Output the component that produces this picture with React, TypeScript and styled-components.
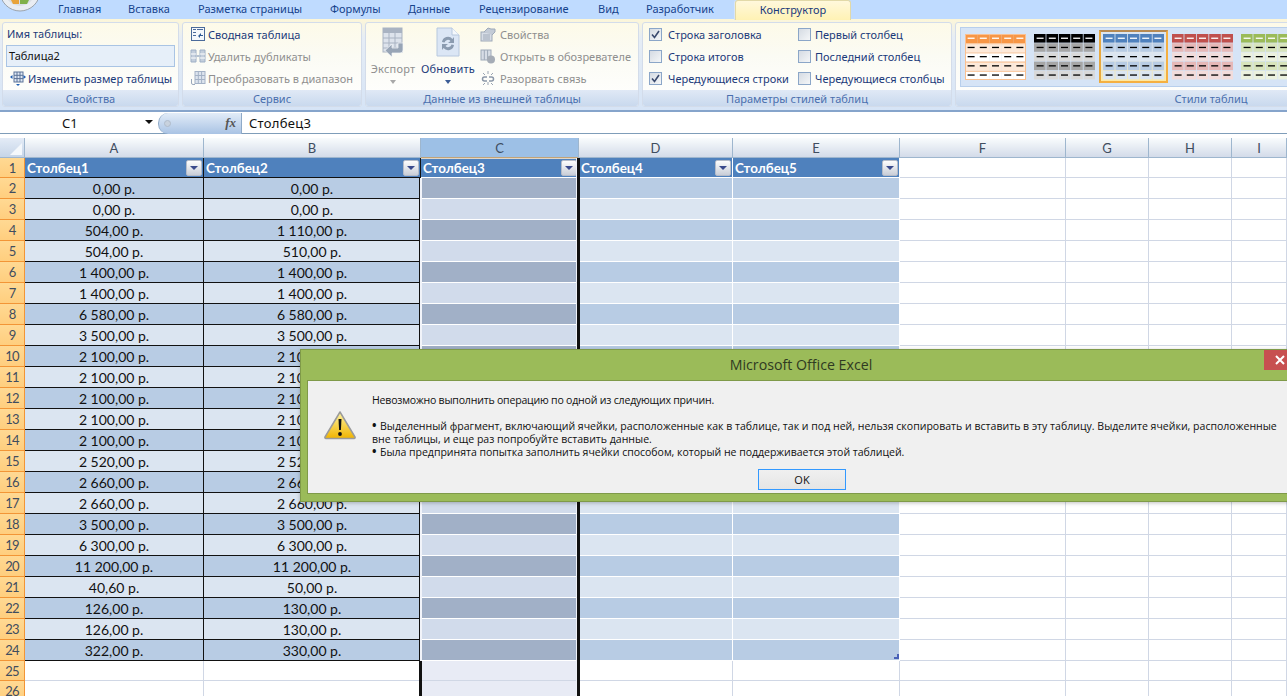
import React from "react";
import styled, { createGlobalStyle, css } from "styled-components";

const Global = createGlobalStyle`
  html, body { margin: 0; padding: 0; background: #fff; overflow: hidden; }
  * { box-sizing: border-box; }
`;
const UI = `"Noto Sans", "DejaVu Sans", sans-serif`;
const CELL = `Lato, "Open Sans", "Noto Sans", sans-serif`;

const Page = styled.div`
  position: relative; width: 1287px; height: 696px; overflow: hidden; background: #fff; font-family: ${UI};
`;
const TabBar = styled.div`
  position: relative; display: flex; height: 19px; padding-left: 58px; background: #bfdbff;
`;
const OfficeOrb = styled.svg`
  position: absolute; left: 0; top: 0; width: 44px; height: 12px;
`;
const Tab = styled.div<{ $w: number; $active?: boolean }>`
  width: ${(p) => p.$w}px; height: 19px; font-size: 11px; line-height: 18px; color: #15428b; white-space: nowrap;
  ${(p) => p.$active && css`
    text-align: center; height: 20px; border: 1px solid #e2d9a8; border-bottom: 0; border-radius: 3px 3px 0 0;
    background: linear-gradient(#fff8dc, #fff2b4); color: #1a3a7c; box-shadow: -1px 0 0 #d8e6f8;
  `}
`;
const Ribbon = styled.div`
  display: flex; height: 93px; gap: 3px; padding: 3px 0 0 2px;
  background: linear-gradient(#fdf6d8 0, #e6edf5 20%, #d6e4f6 100%);
  border-bottom: 2px solid #86a4cb;
`;
const Group = styled.section<{ $w: number }>`
  display: flex; flex-direction: column; flex: none; width: ${(p) => p.$w}px; height: 85px;
  border: 1px solid #d3dcea; border-radius: 3px; overflow: hidden;
  background: linear-gradient(#fdfae8 0, #fbfbf4 40%, #ffffff 100%);
`;
const GroupBody = styled.div`
  flex: 1; display: flex; min-height: 0;
`;
const GroupLabel = styled.div<{ $w?: number }>`
  height: 16px; flex: none; text-align: center; font-size: 11px; line-height: 17px; color: #4a6fae;
  background: linear-gradient(#e0e9f6, #c9d9ee);
  ${(p) => p.$w && `width:${p.$w}px;`}
`;
const Stack = styled.div<{ $x?: number; $w?: number }>`
  display: flex; flex-direction: column; padding-left: ${(p) => p.$x ?? 0}px; ${(p) => p.$w ? `width:${p.$w}px;flex:none;` : ""}
`;
const Row = styled.div<{ $off?: boolean; $gap?: number }>`
  display: flex; align-items: center; height: 22px; gap: ${(p) => p.$gap ?? 4}px; font-size: 11px; white-space: nowrap;
  color: ${(p) => (p.$off ? "#8f8f8f" : "#1b3a7a")};
`;
const NameLabel = styled.div`
  height: 22px; padding-left: 4px; font-size: 11px; line-height: 22px; color: #1b3a7a;
`;
const NameInput = styled.div`
  width: 169px; height: 22px; margin-left: 3px; padding-left: 2px; font-size: 11px; line-height: 20px; color: #111;
  background: #e6eff9; border: 1px solid #a9c4e4;
`;
const ResizeRow = styled(Row)`
  padding-left: 7px;
`;
const Big = styled.div<{ $off?: boolean; $w: number }>`
  display: flex; flex-direction: column; align-items: center; flex: none; width: ${(p) => p.$w}px; padding-top: 4px;
  font-size: 11px; letter-spacing: 0.2px; white-space: nowrap; color: ${(p) => (p.$off ? "#8f8f8f" : "#1b3a7a")};
`;
const BigLabel = styled.div`
  margin-top: 4px; line-height: 16px;
`;
const BigIcon = styled.svg`
  width: 30px; height: 30px; flex: none;
`;
const Caret = styled.div<{ $off?: boolean }>`
  margin-top: 3px; width: 0; height: 0; border: 3.5px solid transparent; border-bottom: 0;
  border-top: 4px solid ${(p) => (p.$off ? "#a8a8a8" : "#3b5c96")};
`;
const Check = styled.span`
  display: inline-flex; align-items: center; justify-content: center; flex: none; width: 13px; height: 13px;
  border: 1px solid #8ba6c8; background: linear-gradient(135deg, #d5dbe3, #f4f6f8);
`;
const Icon = styled.svg`
  width: 16px; height: 16px; flex: none;
`;
const Gallery = styled.div`
  display: flex; width: 400px; height: 60px; margin: 4px 0 0 4px; padding: 6px 0 0 4px; gap: 8px;
  background: #d6e4f6; border: 1px solid #b8cfec;
`;
const SwatchBox = styled.div<{ $sel?: boolean }>`
  flex: none; width: 61px; height: 46px;
  ${(p) => p.$sel && css`
    width: 69px; height: 53px; margin: -4px -4px 0 -4px; padding: 2px;
    border: 2px solid #f5b041; border-top-color: #b78a52; border-left-color: #e8a83f;
    background: linear-gradient(#dbe5f1, #dfe6ec 55%, #ffe9a0);
  `}
`;
const SwatchSvg = styled.svg`
  display: block; width: 61px; height: 46px;
`;

const FormulaBar = styled.div`
  display: flex; align-items: center; height: 21px; background: #fff; border-bottom: 1px solid #7f9db9; font-size: 13px; color: #111;
  margin-top: 1px;
`;
const NameBox = styled.div`
  position: relative; width: 158px; flex: none; padding-left: 62px;
`;
const NameArrow = styled.div`
  position: absolute; left: 145px; top: 6px; width: 0; height: 0; border: 4px solid transparent; border-bottom: 0; border-top: 4px solid #111;
`;
const Pill = styled.div`
  display: flex; align-items: center; justify-content: space-between; width: 84px; height: 21px; flex: none; padding: 0 5px;
  border-radius: 10px 0 0 10px; background: linear-gradient(#e2ecf8, #a9c3e4); border-left: 1px solid #8faac8; border-right: 1px solid #8faac8;
`;
const Dot = styled.span`
  width: 7px; height: 7px; border-radius: 50%; background: #c8d2de; border: 1px solid #b0bccb;
`;
const Fx = styled.span`
  font-family: "Liberation Serif", serif; font-style: italic; font-weight: 700; font-size: 13px; color: #555;
`;
const FormulaText = styled.div`
  padding-left: 7px; font-size: 13px; letter-spacing: 0.3px;
`;

const Sheet = styled.div`
  position: relative; display: grid; margin-top: 4px; height: 558px;
  grid-template-columns: 25px 179px 217px 158px 154px 167px 166px 83px 83px 55px;
  grid-template-rows: 20px 20px repeat(23, 21px) 20px 20px;
  font-family: ${CELL}; font-size: 14px; color: #111;
`;
const Corner = styled.div`
  display: flex; align-items: flex-end; justify-content: flex-end; padding: 0 2px 2px 0;
  background: linear-gradient(#e4ecf7, #c6d5e8); border-right: 1px solid #9eb6ce; border-bottom: 1px solid #9eb6ce;
`;
const CornerMark = styled.div`
  width: 0; height: 0; border-style: solid; border-width: 0 0 12px 12px; border-color: transparent transparent #f4f8fc transparent;
`;
const ColHead = styled.div<{ $sel?: boolean }>`
  display: flex; align-items: center; justify-content: center; font-size: 13px; color: #3f4d5f;
  border-right: 1px solid #9eb6ce; border-bottom: 1px solid #9eb6ce;
  background: ${(p) => (p.$sel ? "#9dc0e6" : "linear-gradient(#f9fcfd, #d3dbe9)")};
`;
const RowHead = styled.div`
  display: flex; align-items: center; justify-content: center; font-size: 13px; letter-spacing: -0.8px; color: #3f4d5f;
  background: linear-gradient(#ffd993, #ffce7e); border-right: 1px solid #f29536; border-bottom: 1px solid #f29536;
`;
const TableHead = styled.div<{ $line: string }>`
  display: flex; align-items: center; justify-content: space-between; padding: 0 1px 0 2px;
  background: #4f81bd; color: #fff; font-weight: 700; font-size: 13.4px;
  border-right: 1px solid ${(p) => p.$line}; border-bottom: 1px solid ${(p) => p.$line};
`;
const Filter = styled.div`
  display: flex; align-items: center; justify-content: center; flex: none; width: 16px; height: 16px; border-radius: 2px;
  background: linear-gradient(#fdfdfd, #c9ced8); border: 1px solid #b5bcc9;
`;
const FilterArrow = styled.div`
  width: 0; height: 0; border: 4px solid transparent; border-bottom: 0; border-top: 4px solid #3a4a8c;
`;
const Cell = styled.div<{ $bg: string; $line: string }>`
  position: relative; display: flex; align-items: center; justify-content: center; padding-top: 1px;
  background: ${(p) => p.$bg}; border-right: 1px solid ${(p) => p.$line}; border-bottom: 1px solid ${(p) => p.$line}; white-space: nowrap;
`;
const Handle = styled.svg`
  position: absolute; right: 0; bottom: 1px; width: 5px; height: 5px;
`;
const SelLeft = styled.div`
  position: absolute; left: 419px; top: 40px; bottom: 0; width: 3px; border-left: 1px solid #111; border-right: 2px solid #f2f4fa;
`;
const SelLeftLow = styled.div`
  position: absolute; left: 419px; top: 523px; bottom: 0; width: 3px; background: #111;
`;
const SelRight = styled.div`
  position: absolute; left: 576px; top: 20px; bottom: 0; width: 4px; border-left: 1px solid #eef1f8; background: #111;
`;
const SelTop = styled.div`
  position: absolute; left: 421px; top: 19px; width: 157px; height: 2px; background: linear-gradient(#b28a52, #f0f0f0);
`;

const Dialog = styled.div`
  position: absolute; left: 300px; top: 349px; width: 1002px; height: 153px; display: flex; flex-direction: column;
  padding: 0 6px 7px; background: #9bbb59; border: 1px solid #7f9a49; box-shadow: 0 1px 4px rgba(0,0,0,.25); font-family: "Open Sans", "Noto Sans", sans-serif;
`;
const Title = styled.div`
  flex: none; height: 30px; text-align: center; font-size: 14.2px; line-height: 30px; color: #2f3a22;
`;
const Close = styled.div`
  position: absolute; top: 0; right: 5px; width: 32px; height: 20px; display: flex; align-items: center; justify-content: center;
  background: #c75050; color: #fff;
`;
const DialogBody = styled.div`
  position: relative; flex: 1; display: flex; background: #f0f0f0; border: 1px solid #7f9a49; padding: 13px 0 0 64px; font-size: 10.55px; color: #111; line-height: 13px;
`;
const Warn = styled.svg`
  position: absolute; left: 15px; top: 29px; width: 34px; height: 30px;
`;
const Msg = styled.div`
  display: flex; flex-direction: column; white-space: nowrap;
`;
const Line = styled.div<{ $track?: number }>`
  ${(p) => p.$track && `letter-spacing: ${p.$track}px;`}
`;
const Bullet = styled.span`
  display: inline-block; width: 8px; font-size: 12px; line-height: 10px; font-weight: 700;
`;
const Gap = styled.div`
  height: 13px;
`;
const Ok = styled.div`
  position: absolute; left: 450px; top: 88px; width: 88px; height: 21px; text-align: center; line-height: 19px; font-size: 11px;
  border: 1px solid #3399ff; background: linear-gradient(#f0f0f0, #e5e5e5);
`;

const Swatch = ({ head, a, b, frame }: { head: string; a: string; b: string; frame?: string }) => (
  <SwatchSvg viewBox="0 0 61 46">
    {[0, 1, 2, 3, 4].map((r) =>
      [0, 1, 2, 3, 4].map((c) => (
        <g key={`${r}-${c}`}>
          <rect x={frame ? c * 12.2 : c * 12.4} y={r * 9.2} width={frame ? 12.2 : 11.6} height={frame ? 9.2 : 8.6} fill={r === 0 ? head : r % 2 ? a : b} />
          <rect x={c * 12.2 + 2.6} y={r * 9.2 + 3.6} width={7} height={1.3} fill={r === 0 ? "#fff" : "#000"} />
        </g>
      ))
    )}
    {frame && <rect x=".5" y=".5" width="60" height="45" fill="none" stroke={frame} />}
    {frame && [1, 2, 3, 4].map((r) => <rect key={r} x="0" y={r * 9.2} width="61" height="1" fill={frame} />)}
  </SwatchSvg>
);

const IconPivot = () => (
  <Icon viewBox="0 0 16 16">
    <rect x="1.5" y="1.5" width="13" height="13" fill="#f4f7fb" stroke="#4a6a9a" />
    <path d="M3 3h3v1H3zM7 3h6v1H7zM3 6h3v1H3zM3 9h3v1H3z" fill="#4a6a9a" />
    <path d="M8 10l3-3 0 2h2v1h-3v2z" fill="#2f5a94" />
  </Icon>
);
const IconDup = () => (
  <Icon viewBox="0 0 16 16">
    <path d="M1 2h5v12H1zM10 2h5v12h-5z" fill="#c3cedc" stroke="#9fb0c6" />
    <path d="M1 6h5M1 10h5M10 6h5M10 10h5" stroke="#fff" />
    <path d="M6.5 8h3" stroke="#9fb0c6" strokeWidth="1.5" />
  </Icon>
);
const IconConv = () => (
  <Icon viewBox="0 0 16 16">
    <rect x="5" y="1.5" width="10" height="12" fill="#dde4ee" stroke="#a4b2c6" />
    <path d="M8.3 2v11M11.6 2v11M5 5.5h10M5 9.5h10" stroke="#a4b2c6" />
    <path d="M1.5 9v4a1.500 1.500 0 0 0 1.500 1.500h2" stroke="#9aa8bc" fill="none" />
  </Icon>
);
const IconResize = () => (
  <Icon viewBox="0 0 16 16">
    <rect x="4" y="2" width="9" height="10" fill="#dfe8f5" stroke="#5b7297" />
    <path d="M7 2v10M10 2v10M4 5.300h9M4 8.600h9" stroke="#5b7297" />
    <path d="M0 7l2.500-2v4zM16 7l-2.500-2v4zM6 14h4l-2 2z" fill="#1f5fb4" />
  </Icon>
);
const IconProps = () => (
  <Icon viewBox="0 0 16 16">
    <rect x="1" y="6" width="11" height="9" fill="#d7dde6" stroke="#9ea9b8" />
    <path d="M3 9h7M3 11h7M3 13h7" stroke="#9ea9b8" />
    <path d="M4 6l4-4 3 1h4v3l-3 3" fill="#c3cbd6" stroke="#9ea9b8" />
  </Icon>
);
const IconBrowser = () => (
  <Icon viewBox="0 0 16 16">
    <rect x="1" y="2" width="10" height="10" fill="#d7dde6" stroke="#9ea9b8" />
    <path d="M4.300 2v10M7.600 2v10" stroke="#9ea9b8" />
    <circle cx="11" cy="11.500" r="4" fill="#a5acb6" />
  </Icon>
);
const IconUnlink = () => (
  <Icon viewBox="0 0 16 16">
    <path d="M7 7H4.500a2 2 0 0 0 0 4H7M9 7h2.500a2 2 0 0 1 0 4H9" fill="none" stroke="#8b97a8" strokeWidth="1.500" />
    <path d="M8 1v3M8 12v3M3 3l2 2M13 3l-2 2M3 15l2-2M13 15l-2-2" stroke="#9aa4b2" />
  </Icon>
);
const IconCheck = () => (
  <svg width="9" height="9" viewBox="0 0 9 9">
    <path d="M1 4.500L3.500 7.500 8 1" fill="none" stroke="#3a4a6e" strokeWidth="1.600" />
  </svg>
);

const cols = ["A", "B", "C", "D", "E", "F", "G", "H", "I"];
const vals: [string, string][] = [
  ["0,00 р.", "0,00 р."], ["0,00 р.", "0,00 р."], ["504,00 р.", "1 110,00 р."], ["504,00 р.", "510,00 р."],
  ["1 400,00 р.", "1 400,00 р."], ["1 400,00 р.", "1 400,00 р."], ["6 580,00 р.", "6 580,00 р."], ["3 500,00 р.", "3 500,00 р."],
  ["2 100,00 р.", "2 100,00 р."], ["2 100,00 р.", "2 100,00 р."], ["2 100,00 р.", "2 100,00 р."], ["2 100,00 р.", "2 100,00 р."],
  ["2 100,00 р.", "2 100,00 р."], ["2 520,00 р.", "2 520,00 р."], ["2 660,00 р.", "2 660,00 р."], ["2 660,00 р.", "2 660,00 р."],
  ["3 500,00 р.", "3 500,00 р."], ["6 300,00 р.", "6 300,00 р."], ["11 200,00 р.", "11 200,00 р."], ["40,60 р.", "50,00 р."],
  ["126,00 р.", "130,00 р."], ["126,00 р.", "130,00 р."], ["322,00 р.", "330,00 р."],
];
const tabs: [string, number][] = [["Главная", 70], ["Вставка", 70], ["Разметка страницы", 132], ["Формулы", 78], ["Данные", 71], ["Рецензирование", 119], ["Вид", 48], ["Разработчик", 89]];

export default function App() {
  return (
    <Page>
      <Global />
      <TabBar>
        <OfficeOrb viewBox="0 0 44 12">
          <circle cx="20" cy="-9" r="20" fill="#e9edf3" stroke="#9aa3ad" />
          <circle cx="20" cy="-9" r="15" fill="#d9dfe7" />
          <path d="M11 0h8v4h-6z" fill="#e8a33a" />
          <path d="M20 0h9l-2 4h-7z" fill="#7fb04a" />
        </OfficeOrb>
        {tabs.map(([t, w]) => <Tab key={t} $w={w}>{t}</Tab>)}
        <Tab $w={116} $active>Конструктор</Tab>
      </TabBar>
      <Ribbon>
        <Group $w={177}>
          <GroupBody>
            <Stack>
              <NameLabel>Имя таблицы:</NameLabel>
              <NameInput>Таблица2</NameInput>
              <ResizeRow $gap={2}><IconResize />Изменить размер таблицы</ResizeRow>
            </Stack>
          </GroupBody>
          <GroupLabel>Свойства</GroupLabel>
        </Group>
        <Group $w={180}>
          <GroupBody>
            <Stack $x={7}>
              <Row $gap={2}><IconPivot />Сводная таблица</Row>
              <Row $gap={2} $off><IconDup />Удалить дубликаты</Row>
              <Row $gap={2} $off><IconConv />Преобразовать в диапазон</Row>
            </Stack>
          </GroupBody>
          <GroupLabel>Сервис</GroupLabel>
        </Group>
        <Group $w={274}>
          <GroupBody>
            <Big $off $w={54}>
              <BigIcon viewBox="0 0 30 30">
                <rect x="5" y="1" width="19" height="24" fill="#dde3ec" stroke="#a9b3c2" />
                <rect x="5" y="1" width="19" height="5" fill="#a9b3c2" />
                <path d="M11 6v19M17 6v19M5 11h19M5 16h19M5 21h19" stroke="#a9b3c2" />
                <path d="M25 16v7a3 3 0 0 1-3 3h-8v4l-7-6.500 7-6.500v4h6v-5z" fill="#98a5b6" stroke="#f4f6f9" strokeWidth=".7" />
              </BigIcon>
              <BigLabel>Экспорт</BigLabel>
              <Caret $off />
            </Big>
            <Big $w={56}>
              <BigIcon viewBox="0 0 30 30">
                <path d="M4 1h15l7 7v21H4z" fill="#dbe6f5" stroke="#b7c8de" />
                <path d="M19 1v7h7" fill="#f4f8fc" stroke="#b7c8de" />
                <path d="M9 15a6 6 0 0 1 10.500-3l1.500-2v6h-6l2.500-2a3.500 3.500 0 0 0-6 1.500zM21 18a6 6 0 0 1-10.500 3L9 23v-6h6l-2.500 2a3.500 3.500 0 0 0 6-1.500z" fill="#8a9bb0" />
              </BigIcon>
              <BigLabel>Обновить</BigLabel>
              <Caret />
            </Big>
            <Stack $x={4}>
              <Row $off><IconProps />Свойства</Row>
              <Row $off><IconBrowser />Открыть в обозревателе</Row>
              <Row $off><IconUnlink />Разорвать связь</Row>
            </Stack>
          </GroupBody>
          <GroupLabel>Данные из внешней таблицы</GroupLabel>
        </Group>
        <Group $w={310}>
          <GroupBody>
            <Stack $x={6} $w={155}>
              <Row $gap={6}><Check><IconCheck /></Check>Строка заголовка</Row>
              <Row $gap={6}><Check />Строка итогов</Row>
              <Row $gap={6}><Check><IconCheck /></Check>Чередующиеся строки</Row>
            </Stack>
            <Stack>
              <Row><Check />Первый столбец</Row>
              <Row><Check />Последний столбец</Row>
              <Row><Check />Чередующиеся столбцы</Row>
            </Stack>
          </GroupBody>
          <GroupLabel>Параметры стилей таблиц</GroupLabel>
        </Group>
        <Group $w={400}>
          <GroupBody>
            <Gallery>
              <SwatchBox><Swatch head="#f79646" a="#fde9d9" b="#ffffff" frame="#fac090" /></SwatchBox>
              <SwatchBox><Swatch head="#000000" a="#a6a6a6" b="#d9d9d9" /></SwatchBox>
              <SwatchBox $sel><Swatch head="#4f81bd" a="#b8cce4" b="#dbe5f1" /></SwatchBox>
              <SwatchBox><Swatch head="#c0504d" a="#e6b8b7" b="#f2dcdb" /></SwatchBox>
              <SwatchBox><Swatch head="#9bbb59" a="#d8e4bc" b="#ebf1de" /></SwatchBox>
            </Gallery>
          </GroupBody>
          <GroupLabel $w={510}>Стили таблиц</GroupLabel>
        </Group>
      </Ribbon>
      <FormulaBar>
        <NameBox>C1<NameArrow /></NameBox>
        <Pill><Dot /><Fx>fx</Fx></Pill>
        <FormulaText>Столбец3</FormulaText>
      </FormulaBar>
      <Sheet>
        <Corner><CornerMark /></Corner>
        {cols.map((c) => <ColHead key={c} $sel={c === "C"}>{c}</ColHead>)}
        <RowHead>1</RowHead>
        {cols.map((c, i) => i < 5 ? (
          <TableHead key={c} $line={i < 2 ? "#111" : "#fff"}>
            Столбец{i + 1}
            <Filter><FilterArrow /></Filter>
          </TableHead>
        ) : <Cell key={c} $bg="#fff" $line="#d0d7e5" />)}
        {Array.from({ length: 25 }, (_, r) => {
          const n = r + 2;
          const inTable = n <= 24;
          const dark = n % 2 === 0;
          return (
            <React.Fragment key={n}>
              <RowHead>{n}</RowHead>
              {cols.map((c, i) => {
                const sel = i === 2;
                let bg = "#fff";
                let line = "#d0d7e5";
                if (inTable && i < 5) {
                  bg = sel ? (dark ? "#a1b0c7" : "#d1dbeb") : dark ? "#b8cce4" : "#dbe5f1";
                  line = i < 2 ? "#111" : "#fff";
                } else if (sel) {
                  bg = "#e8ebf5";
                }
                return (
                  <Cell key={c} $bg={bg} $line={line}>
                    {inTable && i < 2 ? vals[r][i] : null}
                    {n === 24 && i === 4 && (
                      <Handle viewBox="0 0 5 5"><path d="M3 0h2v5H0V3h3z" fill="#4a62b8" /></Handle>
                    )}
                  </Cell>
                );
              })}
            </React.Fragment>
          );
        })}
        <SelTop />
        <SelLeft />
        <SelLeftLow />
        <SelRight />
      </Sheet>
      <Dialog>
        <Title>Microsoft Office Excel</Title>
        <Close>
          <svg width="10" height="10" viewBox="0 0 10 10"><path d="M1 1l8 8M9 1l-8 8" stroke="#fff" strokeWidth="2" /></svg>
        </Close>
        <DialogBody>
          <Warn viewBox="0 0 34 30">
            <defs>
              <linearGradient id="wg" x1="0" y1="0" x2="0" y2="1">
                <stop offset="0" stopColor="#fff3a0" />
                <stop offset="1" stopColor="#f0b400" />
              </linearGradient>
            </defs>
            <path d="M17 2L32 27a1 1 0 0 1-1 1.500H3A1 1 0 0 1 2 27z" fill="url(#wg)" stroke="#9a9a9a" strokeWidth="1.500" strokeLinejoin="round" />
            <path d="M15.500 9h3l-.6 11h-1.800z" fill="#111" />
            <circle cx="17" cy="24" r="1.900" fill="#111" />
          </Warn>
          <Msg>
            <Line $track={-0.2}>Невозможно выполнить операцию по одной из следующих причин.</Line>
            <Gap />
            <Line><Bullet>•</Bullet>Выделенный фрагмент, включающий ячейки, расположенные как в таблице, так и под ней, нельзя скопировать и вставить в эту таблицу. Выделите ячейки, расположенные</Line>
            <Line>вне таблицы, и еще раз попробуйте вставить данные.</Line>
            <Line $track={-0.03}><Bullet>•</Bullet>Была предпринята попытка заполнить ячейки способом, который не поддерживается этой таблицей.</Line>
          </Msg>
          <Ok>OK</Ok>
        </DialogBody>
      </Dialog>
    </Page>
  );
}
